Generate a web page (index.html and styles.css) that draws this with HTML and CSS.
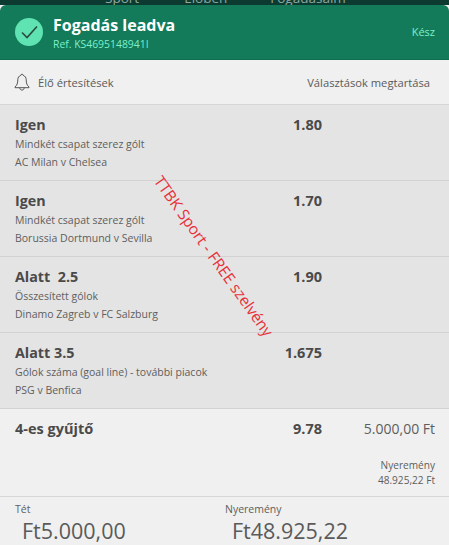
FILE: index.html
```html
<!DOCTYPE html>
<html lang="hu">
<head>
<meta charset="utf-8">
<title>Fogadás leadva</title>
<link rel="stylesheet" href="styles.css">
</head>
<body>
<div class="page">
  <nav class="topnav"><span class="nav-a">Sport</span><span class="nav-b">Élőben</span><span class="nav-c">Fogadásaim</span></nav>
  <header class="banner">
    <div class="tick">
      <svg width="28" height="28" viewBox="0 0 28 28"><path d="M7 14.500l5 5L22 8.500" fill="none" stroke="#2a4a40" stroke-width="1.6"/></svg>
    </div>
    <div class="banner-text">
      <div class="banner-title">Fogadás leadva</div>
      <div class="banner-ref">Ref. KS4695148941I</div>
    </div>
    <div class="done">Kész</div>
  </header>
  <div class="toolbar">
    <div class="alerts">
      <svg class="bell" width="16" height="18" viewBox="0 0 16 18"><path d="M8 1.200c-.8 0-1.200.5-1.200 1.200C4.800 3 3.800 4.600 3.800 6.800c0 3.400-.8 5.400-2.800 7.200v.7h14V14c-2-1.800-2.800-3.800-2.800-7.200 0-2.200-1-3.800-3-4.400C9.200 1.700 8.800 1.200 8 1.200z" fill="none" stroke="#555" stroke-width="1"/><path d="M5.800 14.900c0 1.300 1 2.200 2.200 2.200s2.200-.9 2.200-2.200" fill="none" stroke="#555" stroke-width="1"/></svg>
      <span>Élő értesítések</span>
    </div>
    <div class="keep">Választások megtartása</div>
  </div>
  <section class="row">
    <div class="row-main"><div class="pick">Igen</div><div class="sub">Mindkét csapat szerez gólt</div><div class="sub">AC Milan v Chelsea</div></div>
    <div class="odds">1.80</div>
  </section>
  <section class="row">
    <div class="row-main"><div class="pick">Igen</div><div class="sub">Mindkét csapat szerez gólt</div><div class="sub">Borussia Dortmund v Sevilla</div></div>
    <div class="odds">1.70</div>
  </section>
  <section class="row">
    <div class="row-main"><div class="pick">Alatt&nbsp; 2.5</div><div class="sub">Összesített gólok</div><div class="sub">Dinamo Zagreb v FC Salzburg</div></div>
    <div class="odds">1.90</div>
  </section>
  <section class="row">
    <div class="row-main"><div class="pick">Alatt 3.5</div><div class="sub">Gólok száma (goal line) - további piacok</div><div class="sub">PSG v Benfica</div></div>
    <div class="odds">1.675</div>
  </section>
  <section class="summary">
    <div class="summary-top">
      <div class="pick summary-name">4-es gyűjtő</div>
      <div class="odds">9.78</div>
      <div class="stake">5.000,00 Ft</div>
    </div>
    <div class="returns">Nyeremény<br>48.925,22 Ft</div>
  </section>
  <footer class="totals">
    <div class="total total-stake"><div class="total-label">Tét</div><div class="total-value">Ft5.000,00</div></div>
    <div class="total"><div class="total-label">Nyeremény</div><div class="total-value">Ft48.925,22</div></div>
  </footer>
  <div class="watermark">TTBK Sport - FREE szelvény</div>
</div>
</body>
</html>
```
FILE: styles.css
```css
* { box-sizing: border-box; }
html, body { margin: 0; padding: 0; }
body { background: #f0f0f0; font-family: "Open Sans", "Noto Sans", sans-serif; color: #4a4a4a; }
.page { position: relative; width: 449px; height: 545px; overflow: hidden; background: #f0f0f0; }
.topnav { height: 5px; background: #0c3a30; overflow: hidden; color: #8fa8a0; font-size: 13.500px; line-height: 20px; display: flex; }
.topnav span { display: block; margin-top: -12px; height: 20px; }
.nav-a { margin-left: 105px; }
.nav-b { margin-left: 45px; }
.nav-c { margin-left: 43px; }
.banner { height: 55px; background: #137a5a; border-radius: 6px 6px 0 0; border-bottom: 1px solid #0f6e50; display: flex; align-items: center; padding: 0 14px 0 15px; }
.tick { width: 28px; height: 28px; border-radius: 50%; background: #5fe3b2; flex: none; }
.tick svg { display: block; }
.banner-text { flex: 1; margin-left: 10px; }
.banner-title { color: #fff; font-size: 16px; font-weight: 700; line-height: 22px; }
.banner-ref { color: #7df0c8; font-size: 10.400px; line-height: 14px; margin-top: 1px; }
.done { color: #7df0c8; font-size: 11px; margin-top: -1px; }
.toolbar { height: 45px; display: flex; justify-content: space-between; align-items: center; padding: 0 19px 0 14px; font-size: 11.200px; color: #5a5a5a; border-bottom: 1px solid #d6d6d6; }
.alerts { display: flex; align-items: center; gap: 8px; }
.bell { display: block; }
.row { height: 76px; background: #e4e4e4; border-bottom: 1px solid #d2d2d2; display: flex; padding: 9px 0 0 15px; }
.row-main { width: 233px; }
.pick { font-size: 14.300px; font-weight: 700; line-height: 22px; color: #4a4a4a; }
.sub { font-size: 10.500px; line-height: 18px; color: #5e5e5e; margin-top: -1px; }
.sub + .sub { margin-top: 0; }
.odds { width: 74px; text-align: right; font-size: 14.500px; font-weight: 700; line-height: 22px; color: #4a4a4a; }
.summary { height: 88px; border-bottom: 1px solid #d6d6d6; padding: 9px 14px 0 15px; }
.summary-top { display: flex; }
.summary-name { width: 233px; font-size: 14.500px; }
.stake { flex: 1; text-align: right; font-size: 14px; line-height: 22px; color: #5e5e5e; }
.returns { text-align: right; font-size: 10.100px; line-height: 15px; color: #5e5e5e; margin-top: 18px; }
.totals { display: flex; padding: 5px 0 0 15px; }
.total { display: flex; flex-direction: column; }
.total-stake { width: 210px; }
.total-label { font-size: 10.500px; line-height: 14px; color: #5e5e5e; }
.total-value { font-size: 21.500px; line-height: 29px; color: #5a5a5a; margin-left: 7px; }
.watermark { position: absolute; left: 104px; top: 246px; width: 220px; text-align: center; font-size: 15.500px; line-height: 20px; color: #e8303a; transform: rotate(54.500deg); white-space: nowrap; }
```
